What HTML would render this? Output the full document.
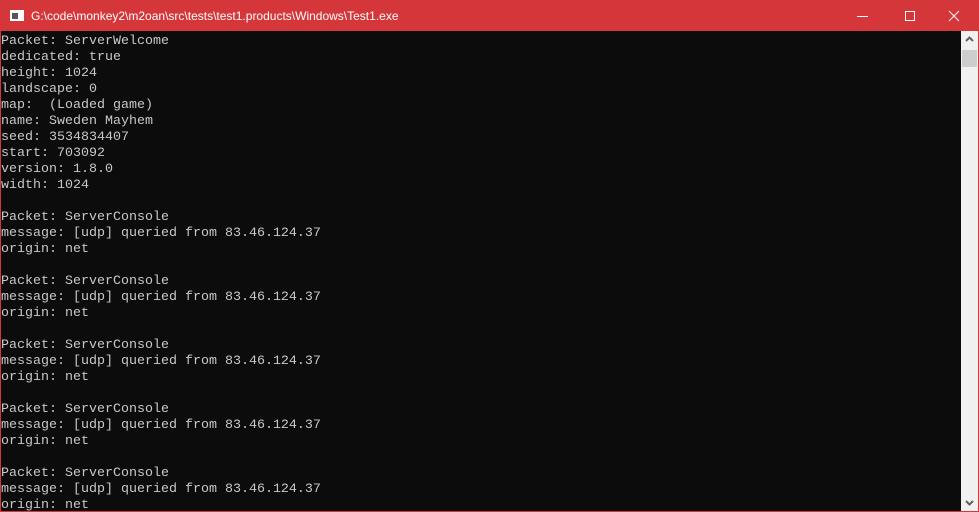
<!DOCTYPE html>
<html><head><style>
html,body{margin:0;padding:0;width:979px;height:512px;overflow:hidden;background:#d4363a;}
.win{position:absolute;left:0;top:0;width:977px;height:510px;border:1px solid #d4363a;background:#0c0c0c;}
.title{position:absolute;left:0;top:0;width:977px;height:30px;background:#d4363a;color:#fff;font:12px "Liberation Sans",sans-serif;}
.title .t{position:absolute;left:30px;top:8px;}
.icon{position:absolute;left:9px;top:9px;width:14px;height:11px;background:#fff;}
.icon:after{content:"";position:absolute;left:2px;top:3px;width:6px;height:6px;background:#555;}
.con{position:absolute;left:0;top:31px;width:960px;height:479px;background:#0c0c0c;overflow:hidden;}
pre{margin:0;padding:2px 0 0 0;color:#c8c8c8;font:13.33px/16px "Liberation Mono",monospace;}
.sb{position:absolute;left:960px;top:30px;width:17px;height:480px;background:#f0f0f0;}
.thumb{position:absolute;left:1px;top:19px;width:15px;height:17px;background:#cdcdcd;}
.ctrl{position:absolute;top:0;height:30px;width:46px;}
</style></head><body>
<div class="win">
<div class="title"><div class="icon"></div><span class="t">G:\code\monkey2\m2oan\src\tests\test1.products\Windows\Test1.exe</span>
<svg class="ctrl" style="left:838px" width="46" height="30"><line x1="18" y1="15.5" x2="29" y2="15.5" stroke="#fff"/></svg>
<svg class="ctrl" style="left:884px" width="46" height="30"><rect x="20.5" y="10.5" width="9" height="9" fill="none" stroke="#fff"/></svg>
<svg class="ctrl" style="left:930px" width="46" height="30"><path d="M18 10L28 20M28 10L18 20" stroke="#fff"/></svg>
</div>
<div class="con"><pre>Packet: ServerWelcome
dedicated: true
height: 1024
landscape: 0
map:  (Loaded game)
name: Sweden Mayhem
seed: 3534834407
start: 703092
version: 1.8.0
width: 1024

Packet: ServerConsole
message: [udp] queried from 83.46.124.37
origin: net

Packet: ServerConsole
message: [udp] queried from 83.46.124.37
origin: net

Packet: ServerConsole
message: [udp] queried from 83.46.124.37
origin: net

Packet: ServerConsole
message: [udp] queried from 83.46.124.37
origin: net

Packet: ServerConsole
message: [udp] queried from 83.46.124.37
origin: net</pre></div>
<div class="sb">
<svg style="position:absolute;left:0;top:0" width="17" height="17"><path d="M5 10L8.5 6.5L12 10" stroke="#606060" stroke-width="2" fill="none"/></svg>
<div class="thumb"></div>
<svg style="position:absolute;left:0;top:463px" width="17" height="17"><path d="M5 7L8.5 10.5L12 7" stroke="#606060" stroke-width="2" fill="none"/></svg>
</div>
</div>
</body></html>
